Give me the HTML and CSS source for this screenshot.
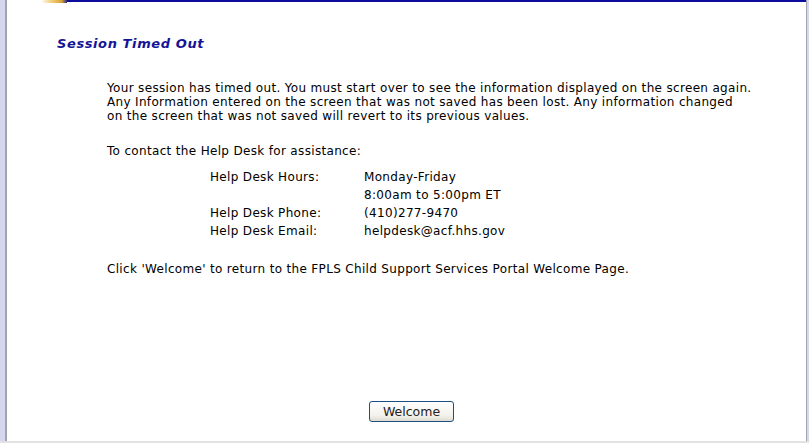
FILE: index.html
```html
<html>
	<head>
		<title>Session Timed Out</title>
		<link rel="stylesheet" href="styles.css">
	</head>
	<body>
		<div class='frame'>
			<div class='edge-left'></div>
			<div class='page'>
				<div class='top-bar'>
					<span class='logo-tail'></span>
					<span class='rule'></span>
				</div>
				<h1>Session Timed Out</h1>
				<div class='content'>
					<p class='notice'>Your session has timed out. You must start over to see the information displayed on the screen again.<br>Any Information entered on the screen that was not saved has been lost. Any information changed<br>on the screen that was not saved will revert to its previous values.</p>
					<p class='contact'>To contact the Help Desk for assistance:</p>
					<div class='help-table'>
						<span>Help Desk Hours:</span><span>Monday-Friday</span>
						<span></span><span>8:00am to 5:00pm ET</span>
						<span>Help Desk Phone:</span><span>(410)277-9470</span>
						<span>Help Desk Email:</span><span>helpdesk@acf.hhs.gov</span>
					</div>
					<p class='welcome-note'>Click 'Welcome' to return to the FPLS Child Support Services Portal Welcome Page.</p>
				</div>
				<div class='actions'>
					<button type='button'>Welcome</button>
				</div>
			</div>
			<div class='edge-right'></div>
		</div>
	</body>
</html>
```
FILE: styles.css
```css
html, body {
	margin: 0;
	height: 100%;
}
body {
	font: 12px 'DejaVu Sans', Verdana, sans-serif;
	letter-spacing: .33px;
	color: #000;
	background-color: #fff;
}
.frame {
	display: flex;
	height: 441px;
	border-bottom: 2px solid #e2e2e2;
}
.edge-left {
	width: 5px;
	background-color: #d5d7ef;
	border-right: 2px solid #a3a3ab;
}
.edge-right {
	width: 2px;
	background-color: #d5d7ef;
	border-left: 1px solid #a3a3ab;
}
.page {
	flex: 1;
	display: flex;
	flex-direction: column;
	background-color: #fff;
}
.top-bar {
	display: flex;
	height: 3px;
}
.logo-tail {
	width: 26px;
	margin-left: 34px;
	background: linear-gradient(90deg, #fff 0%, #f1cf7a 40%, #d9a232 80%, #2a2a90 100%);
}
.rule {
	flex: 1;
	height: 2px;
	background-color: #0c0c9c;
}
h1 {
	margin: 33px 0 0 50px;
	font-size: 13px;
	line-height: 16px;
	letter-spacing: .6px;
	font-weight: bold;
	font-style: italic;
	color: #141496;
}
.content {
	margin-left: 100px;
	line-height: 14px;
}
.notice {
	margin: 29px 0 0;
}
.contact {
	margin: 21px 0 0;
}
.help-table {
	display: grid;
	grid-template-columns: 154px auto;
	grid-auto-rows: 18px;
	align-items: center;
	margin: 10px 0 0 103px;
}
.welcome-note {
	margin: 22px 0 0;
}
.actions {
	display: flex;
	justify-content: center;
	margin-top: 125px;
	padding-left: 10px;
}
button {
	width: 85px;
	height: 21px;
	padding: 0;
	font: 12.5px 'DejaVu Sans', Tahoma, sans-serif;
	letter-spacing: 0;
	color: #222;
	background: linear-gradient(#fff, #f3f2ec 70%, #dedbd0);
	border: 1px solid #1c4f85;
	border-radius: 3px;
}
```
